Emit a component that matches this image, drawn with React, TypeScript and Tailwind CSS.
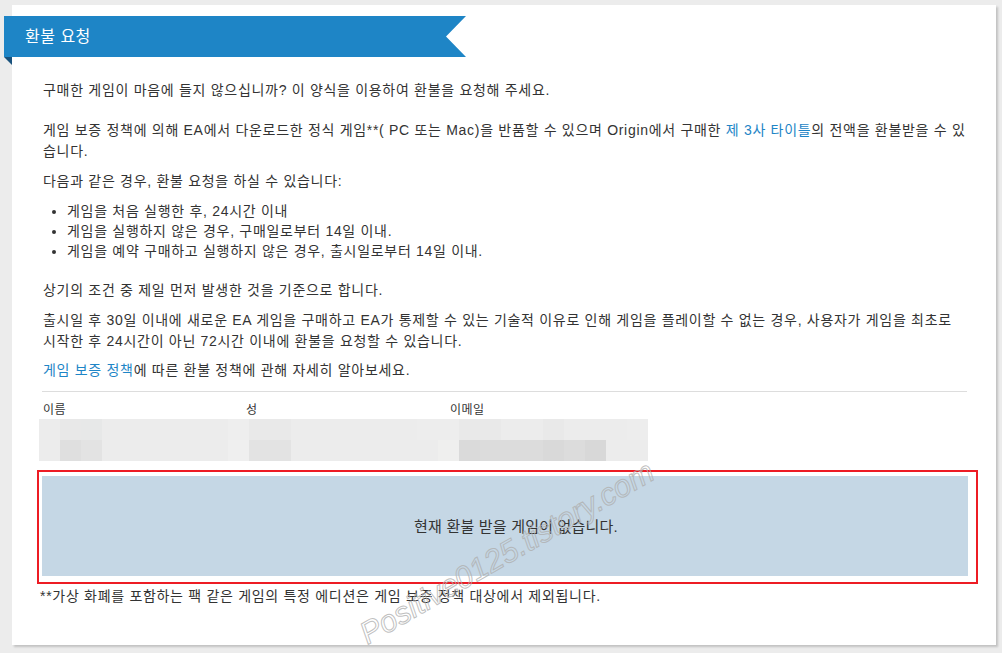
import React from "react";

const nameRow1 = [
  "#ececec", "#e8e8e8", "#e7e8e8", "#ececec", "#ececec", "#ececec", "#ececec", "#ececec", "#ececec", "#eeeeee",
  "#e9e9e9", "#e9e9e9", "#ececec", "#ececec", "#ececec", "#ececec", "#ececec", "#ececec", "#ededed", "#ededed",
  "#e9e9e9", "#e9e9e9", "#ececec", "#ececec", "#e9e9e9", "#ececec", "#ececec", "#ececec", "#ededed",
];
const nameRow2 = [
  "#ececec", "#dfdfdf", "#e3e3e3", "#ececec", "#ececec", "#ececec", "#ececec", "#ececec", "#ececec", "#efefef",
  "#e3e3e3", "#e3e3e3", "#ececec", "#ececec", "#ececec", "#ececec", "#ececec", "#ececec", "#ececec", "#efefee",
  "#dadada", "#dcdcdc", "#dcdcdc", "#dcdcdc", "#d9d9d9", "#dcdcdc", "#d8d8d8", "#ececec", "#ececec",
];

export default function App() {
  return (
    <div className="w-[1002px] h-[653px] overflow-hidden bg-[#ececec] pt-[5px] pl-[12px] font-['Liberation_Sans','Noto_Sans_CJK_KR',sans-serif] text-[#333] text-[14px] tracking-[0.7px] leading-[21px]">
      <div className="relative w-[984px] h-[640px] bg-white shadow-[2px_2px_2px_rgba(0,0,0,0.18)]">
        {/* ribbon */}
        <div className="pt-[11px] -ml-[8px]">
          <div className="w-[462px] h-[41px] bg-[#1e85c6] [clip-path:polygon(0_0,100%_0,calc(100%-20px)_50%,100%_100%,0_100%)] flex items-center pl-[21px]">
            <span className="text-white text-[16px] tracking-[0.5px]">환불 요청</span>
          </div>
          <div className="w-[8px] h-[8px] bg-[#19527d] [clip-path:polygon(0_0,100%_0,100%_100%)]" />
        </div>

        <div className="pl-[31px] pr-[17px] pt-[15px]">
          <p>구매한 게임이 마음에 들지 않으십니까? 이 양식을 이용하여 환불을 요청해 주세요.</p>
          <p className="mt-[19px]">
            게임 보증 정책에 의해 EA에서 다운로드한 정식 게임**( PC 또는 Mac)을 반품할 수 있으며 Origin에서 구매한{" "}
            <span className="text-[#1e85c6]">제 3사 타이틀</span>의 전액을 환불받을 수 있습니다.
          </p>
          <p className="mt-[9px]">다음과 같은 경우, 환불 요청을 하실 수 있습니다:</p>
          <ul className="mt-[9px] pl-[24px] list-disc leading-[20px]">
            <li>게임을 처음 실행한 후, 24시간 이내</li>
            <li>게임을 실행하지 않은 경우, 구매일로부터 14일 이내.</li>
            <li>게임을 예약 구매하고 실행하지 않은 경우, 출시일로부터 14일 이내.</li>
          </ul>
          <p className="mt-[19px]">상기의 조건 중 제일 먼저 발생한 것을 기준으로 합니다.</p>
          <p className="mt-[9px] break-keep">
            출시일 후 30일 이내에 새로운 EA 게임을 구매하고 EA가 통제할 수 있는 기술적 이유로 인해 게임을 플레이할 수 없는 경우, 사용자가 게임을 최초로 시작한 후 24시간이 아닌 72시간 이내에 환불을 요청할 수 있습니다.
          </p>
          <p className="mt-[8px]">
            <span className="text-[#1e85c6]">게임 보증 정책</span>에 따른 환불 정책에 관해 자세히 알아보세요.
          </p>
          <div className="mt-[10px] h-px bg-[#dddddd] w-[925px] -ml-px" />

          <div className="mt-[9px] flex text-[12px] tracking-[0.5px] leading-[18px]">
            <span className="w-[203px]">이름</span>
            <span className="w-[204px]">성</span>
            <span>이메일</span>
          </div>
          <div className="-ml-[4px] grid grid-cols-[repeat(29,21px)] grid-rows-[21px_21px] w-[609px]">
            {nameRow1.map((c, i) => (
              <div key={"a" + i} style={{ backgroundColor: c }} />
            ))}
            {nameRow2.map((c, i) => (
              <div key={"b" + i} style={{ backgroundColor: c }} />
            ))}
          </div>

          <div className="mt-[9px] -ml-[6px] w-[941px] h-[114px] border-2 border-[#ed1c24] pt-[4px] pl-[3px] pr-[8px] pb-[6px]">
            <div className="h-full bg-[#c5d7e5] flex items-center justify-center pl-[22px] text-[15px] tracking-[0.2px]">
              현재 환불 받을 게임이 없습니다.
            </div>
          </div>
          <p className="mt-[2px] -ml-[3px]">**가상 화폐를 포함하는 팩 같은 게임의 특정 에디션은 게임 보증 정책 대상에서 제외됩니다.</p>
        </div>

        {/* watermark */}
        <div className="pointer-events-none absolute left-[328px] top-[537px] -rotate-[30deg] text-[31px] italic tracking-normal font-['Liberation_Sans',sans-serif] text-transparent [-webkit-text-stroke:1px_rgba(175,175,175,0.8)] whitespace-nowrap">
          Positive0125.tistory.com
        </div>
      </div>
    </div>
  );
}
